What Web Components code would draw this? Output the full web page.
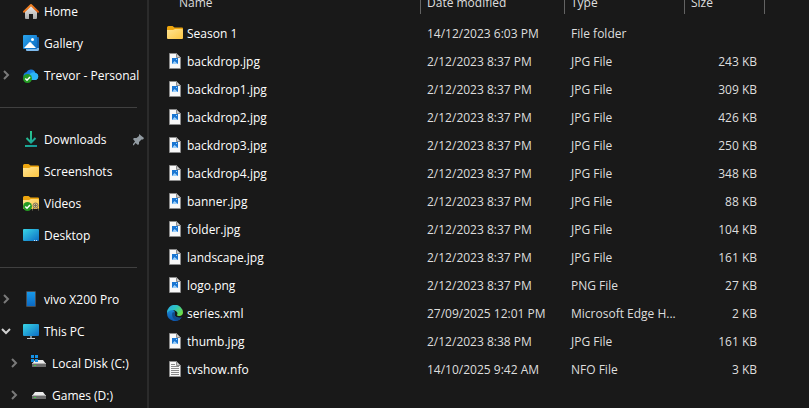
<!DOCTYPE html>
<html lang="en">
<head>
<meta charset="utf-8">
<title>File Explorer</title>
<style>
    html, body {
        margin: 0;
        height: 100%;
        overflow: hidden;
        background: #191919;
        color: #fff;
        font: 12px/16px "Open Sans", "Noto Sans", sans-serif;
    }
</style>
</head>
<body>
<explorer-window>
    <nav-pane slot="nav">
        <nav-item icon="home">Home</nav-item>
        <nav-item icon="gallery">Gallery</nav-item>
        <nav-item icon="cloud" toggle="closed">Trevor - Personal</nav-item>
        <nav-divider></nav-divider>
        <nav-item icon="download" pinned>Downloads</nav-item>
        <nav-item icon="folder">Screenshots</nav-item>
        <nav-item icon="videos">Videos</nav-item>
        <nav-item icon="desktop">Desktop</nav-item>
        <nav-divider></nav-divider>
        <nav-item icon="phone" toggle="closed">vivo X200 Pro</nav-item>
        <nav-item icon="pc" toggle="open">This PC</nav-item>
        <nav-item icon="disk-win" toggle="closed" nested>Local Disk (C:)</nav-item>
        <nav-item icon="disk" toggle="closed" nested>Games (D:)</nav-item>
    </nav-pane>
    <file-table></file-table>
</explorer-window>

<script>
const ICONS = {
    'home': `
        <defs>
            <linearGradient id="a" x2="0" y2="1"><stop stop-color="#f2f2f2"/><stop offset="1" stop-color="#a9a9a9"/></linearGradient>
            <linearGradient id="b" x2="1" y2="1"><stop stop-color="#f9902b"/><stop offset="1" stop-color="#d8590f"/></linearGradient>
        </defs>
        <path fill="url(#a)" d="M2 7.5 8 2l6 5.500V15a1 1 0 0 1-1 1h-3v-5H6v5H3a1 1 0 0 1-1-1z"/>
        <path fill="none" stroke="url(#b)" stroke-width="2" stroke-linecap="round" stroke-linejoin="round" d="M1 8.700 8 2l7 6.700"/>`,
    'gallery': `
        <defs><linearGradient id="a" x2="1" y2="1"><stop stop-color="#2aa5ee"/><stop offset="1" stop-color="#0b6bc4"/></linearGradient></defs>
        <path fill="#1663ad" d="M13 2h2a1 1 0 0 1 1 1v11H13z"/>
        <path fill="#7db9ec" d="M3 13h13v1.500a1.500 1.500 0 0 1-1.500 1.500H4a1 1 0 0 1-1-1z"/>
        <rect width="14" height="14" rx="1" fill="url(#a)"/>
        <path fill="#fff" d="m1 13 5.200-5.600q.8-.7 1.600 0L13 13z"/>
        <circle cx="9.500" cy="4.500" r="1.500" fill="#fff"/>`,
    'cloud': `
        <defs><linearGradient id="a" x2="1" y2="1"><stop stop-color="#0a5fd0"/><stop offset="1" stop-color="#35c3fb"/></linearGradient></defs>
        <path fill="url(#a)" d="M4 13a4 4 0 0 1-.7-7.800A5 5 0 0 1 12.500 6 3.600 3.600 0 0 1 12.400 13z"/>
        <path fill="#2cb4f6" d="M7 7q3-3 5.500-1A3.600 3.600 0 0 1 12.400 13H6z"/>
        <circle cx="4.500" cy="11.500" r="4.500" fill="#259b24"/>
        <path fill="none" stroke="#fff" stroke-width="1.500" d="m2.300 11.500 1.700 1.700 3-3.200"/>`,
    'download': `
        <defs><linearGradient id="a" gradientUnits="userSpaceOnUse" x1="2" y1="0" x2="13" y2="16"><stop stop-color="#2fd08c"/><stop offset="1" stop-color="#14959a"/></linearGradient></defs>
        <path fill="none" stroke="url(#a)" stroke-width="2" d="M8 0v11M3.500 7 8 11.500 12.500 7M2 15h12"/>`,
    'folder': `
        <defs><linearGradient id="a" x2="1" y2="1"><stop stop-color="#ffe493"/><stop offset="1" stop-color="#fcc541"/></linearGradient></defs>
        <path fill="#eda50e" d="M0 2.500a1.500 1.500 0 0 1 1.500-1.500h4L7.500 2.500H15a1 1 0 0 1 1 1v5H0z"/>
        <path fill="url(#a)" d="M0 5h6L8 4h7a1 1 0 0 1 1 1v8a1 1 0 0 1-1 1H1a1 1 0 0 1-1-1z"/>`,
    'videos': `
        <defs><linearGradient id="a" x2="1" y2="1"><stop stop-color="#ffe493"/><stop offset="1" stop-color="#fcc541"/></linearGradient></defs>
        <path fill="#eda50e" d="M0 2.500a1.500 1.500 0 0 1 1.500-1.500h4L7.500 2.500H15a1 1 0 0 1 1 1v5H0z"/>
        <path fill="url(#a)" d="M0 5h6L8 4h7a1 1 0 0 1 1 1v8a1 1 0 0 1-1 1H1a1 1 0 0 1-1-1z"/>
        <circle cx="12.500" cy="10.500" r="2.500" fill="#e2c27a" stroke="#79715f"/>
        <path fill="none" stroke="#79715f" d="M12.500 9v3M11 10.500h3M9.500 15.500v-1l1.500-1.500M15.500 15.500v-1L14 13"/>
        <circle cx="4.500" cy="11.500" r="4.500" fill="#259b24"/>
        <path fill="none" stroke="#fff" stroke-width="1.500" d="m2.300 11.500 1.700 1.700 3-3.200"/>`,
    'desktop': `
        <defs><linearGradient id="a" x2="1" y2="1"><stop stop-color="#38d6e6"/><stop offset="1" stop-color="#0c6cc5"/></linearGradient></defs>
        <rect y="2" width="16" height="12" rx="1" fill="url(#a)"/>
        <path fill="#cfe6f8" d="M11 13h1v1h-1zM13 13h1v1h-1z"/>`,
    'phone': `
        <defs><linearGradient id="a" x2="0" y2="1"><stop stop-color="#189bea"/><stop offset="1" stop-color="#0b68c2"/></linearGradient></defs>
        <rect x="3.500" y=".5" width="9" height="15" rx=".5" fill="url(#a)" stroke="#474d54"/>`,
    'pc': `
        <defs><linearGradient id="a" x2="1" y2="1"><stop stop-color="#38d6e6"/><stop offset="1" stop-color="#0c6cc5"/></linearGradient></defs>
        <path fill="#7e8a92" d="M7 13h2v2H7z"/>
        <path fill="#c3c9cd" d="M4 15h8v1H4z"/>
        <rect y="1" width="16" height="12" rx="1" fill="url(#a)"/>`,
    'disk': `
        <path fill="#ececec" d="M4 5h8l3 4H1z"/>
        <rect x="1" y="8" width="14" height="4" rx=".5" fill="#6d6d6d"/>
        <path fill="#b4b4b4" d="M1 8h14v1H1z"/>
        <path fill="#3ecb3e" d="M3 10h2v1H3z"/>`,
    'disk-win': `
        <path fill="#ececec" d="M4 5h8l3 4H1z"/>
        <rect x="1" y="8" width="14" height="4" rx=".5" fill="#6d6d6d"/>
        <path fill="#b4b4b4" d="M1 8h14v1H1z"/>
        <path fill="#3ecb3e" d="M3 10h2v1H3z"/>
        <path fill="#1592e6" d="M0 0h3v3H0zM4 0h3v3H4zM0 4h3v3H0zM4 4h3v3H4z"/>`,
    'image': `
        <path fill="#f8f8f8" stroke="#8d8d8d" d="M2.500.5h7l4 4v11h-11z"/>
        <path fill="#c9c9c9" stroke="#8d8d8d" d="M9.500.5v4h4z"/>
        <rect x="5" y="5" width="6" height="6" fill="#1a76d2"/>
        <path fill="#9ed0fa" d="m5 11 2.500-3L11 11zM9 6h1v1H9z"/>`,
    'text': `
        <path fill="#f8f8f8" stroke="#8d8d8d" d="M2.500.5h7l4 4v11h-11z"/>
        <path fill="#c9c9c9" stroke="#8d8d8d" d="M9.500.5v4h4z"/>
        <path stroke="#8a8a8a" d="M4 3.500h4M4 5.500h8M4 7.500h8M4 9.500h8M4 11.500h8M4 13.500h8"/>`,
    'edge': `
        <defs>
            <linearGradient id="a" x2="1" y2=".6"><stop stop-color="#2ba7e6"/><stop offset=".5" stop-color="#2cc3c3"/><stop offset="1" stop-color="#6bdd48"/></linearGradient>
            <linearGradient id="b" x2="0" y2="1"><stop stop-color="#1c8fdc"/><stop offset="1" stop-color="#0d55ac"/></linearGradient>
        </defs>
        <path fill="url(#b)" d="M0 8a8 8 0 0 0 14.800 4.200c-1.800.9-4 .8-5.500-.2C7.500 10.800 7 9 8 7L5 3.500Q0 4.500 0 8z"/>
        <path fill="#114a8b" d="M5.500 7.500c-1.200 3 .5 7.500 4.500 8.200a8 8 0 0 0 4.800-3.500c-2 .9-4 .8-5.500-.2C7.500 10.800 7 9 8 7z"/>
        <path fill="url(#a)" d="M0 8a8 8 0 0 1 16-.5c0 2.300-1.700 3.500-3.500 3.500-1.500 0-2.800-.6-2.500-1.200.7-.9.700-2-.3-3C7.500 4.300 2.500 4.300 0 8z"/>`,
    'closed': '<path fill="none" stroke="#7a7a7a" stroke-width="2" d="m6 4 4 4-4 4"/>',
    'open': '<path fill="none" stroke="#d0d0d0" stroke-width="2" d="m4 6 4 4 4-4"/>',
    'pin': `
        <path fill="#929ba2" d="m10 3 5 4-1 1.500h-1.500L10 11v2l-1 1-2.500-2L5 14l-1 .5V13l2-2.500L4 8l1-1h2.500L10 5z"/>`
};

class ExplorerIcon extends HTMLElement {

    constructor() {
        super();
        this.attachShadow({mode: 'open'});
    }

    connectedCallback() {
        this.shadowRoot.innerHTML = `
            <style>
                :host { display: block; flex: none; width: 16px; height: 16px; }
                svg { display: block; width: 100%; height: 100%; }
            </style>
            <svg viewBox="0 0 16 16" aria-hidden="true">${ICONS[this.getAttribute('name')]}</svg>`;
    }
}

class ExplorerWindow extends HTMLElement {

    constructor() {
        super();
        this.attachShadow({mode: 'open'}).innerHTML = `
            <style>
                :host { display: flex; height: 100%; overflow: hidden; }
                main { flex: 1; min-width: 0; overflow: hidden; }
            </style>
            <slot name="nav"></slot>
            <main><slot></slot></main>`;
    }
}

class NavPane extends HTMLElement {

    constructor() {
        super();
        this.attachShadow({mode: 'open'}).innerHTML = `
            <style>
                :host {
                    display: block;
                    flex: none;
                    width: 147px;
                    overflow: hidden;
                    border-right: 2px solid #2b2b2b;
                }
                /* list is scrolled slightly past its first row */
                nav { margin-top: -5px; }
            </style>
            <nav aria-label="Folders"><slot></slot></nav>`;
    }
}

class NavDivider extends HTMLElement {

    constructor() {
        super();
        this.attachShadow({mode: 'open'}).innerHTML = `
            <style>
                :host { display: flex; align-items: center; height: 32px; padding-right: 10px; }
                hr { flex: 1; margin: 0; border: 0; border-top: 1px solid #404040; }
            </style>
            <hr>`;
    }
}

class NavItem extends HTMLElement {

    constructor() {
        super();
        this.attachShadow({mode: 'open'});
    }

    connectedCallback() {
        const toggle = this.getAttribute('toggle');
        this.shadowRoot.innerHTML = `
            <style>${this.componentStyle}</style>
            ${toggle ? `<button type="button" aria-label="Expand" aria-expanded="${toggle === 'open'}">
                <explorer-icon name="${toggle}"></explorer-icon>
            </button>` : '<span class="spacer"></span>'}
            <a href="#">
                <explorer-icon name="${this.getAttribute('icon')}"></explorer-icon>
                <span><slot></slot></span>
            </a>
            ${this.hasAttribute('pinned') ? '<explorer-icon name="pin"></explorer-icon>' : ''}`;
    }

    get componentStyle() {
        return `
            :host {
                display: flex;
                align-items: center;
                height: 32px;
                padding-right: 2px;
            }
            :host([nested]) { padding-left: 8px; }
            button, .spacer {
                flex: none;
                display: flex;
                justify-content: center;
                width: 11px;
                margin-right: 12px;
                padding: 0;
                border: 0;
                background: none;
            }
            a {
                flex: 1;
                display: flex;
                align-items: center;
                gap: 5px;
                color: inherit;
                text-decoration: none;
                white-space: nowrap;
            }
            a span { padding-top: 2px; }`;
    }
}

const FILES = [
    ['folder', 'Season 1', '14/12/2023 6:03 PM', 'File folder', ''],
    ['image', 'backdrop.jpg', '2/12/2023 8:37 PM', 'JPG File', '243 KB'],
    ['image', 'backdrop1.jpg', '2/12/2023 8:37 PM', 'JPG File', '309 KB'],
    ['image', 'backdrop2.jpg', '2/12/2023 8:37 PM', 'JPG File', '426 KB'],
    ['image', 'backdrop3.jpg', '2/12/2023 8:37 PM', 'JPG File', '250 KB'],
    ['image', 'backdrop4.jpg', '2/12/2023 8:37 PM', 'JPG File', '348 KB'],
    ['image', 'banner.jpg', '2/12/2023 8:37 PM', 'JPG File', '88 KB'],
    ['image', 'folder.jpg', '2/12/2023 8:37 PM', 'JPG File', '104 KB'],
    ['image', 'landscape.jpg', '2/12/2023 8:37 PM', 'JPG File', '161 KB'],
    ['image', 'logo.png', '2/12/2023 8:37 PM', 'PNG File', '27 KB'],
    ['edge', 'series.xml', '27/09/2025 12:01 PM', 'Microsoft Edge H...', '2 KB'],
    ['image', 'thumb.jpg', '2/12/2023 8:38 PM', 'JPG File', '161 KB'],
    ['text', 'tvshow.nfo', '14/10/2025 9:42 AM', 'NFO File', '3 KB']
];

class FileTable extends HTMLElement {

    constructor() {
        super();
        this.attachShadow({mode: 'open'});
    }

    connectedCallback() {
        this.shadowRoot.innerHTML = `
            <style>${this.componentStyle}</style>
            <table>
                <thead>
                    <tr>
                        <th class="name">Name</th>
                        <th class="date">Date modified</th>
                        <th class="type">Type</th>
                        <th class="size">Size</th>
                    </tr>
                </thead>
                <tbody>${FILES.map(file => this.row(file)).join('')}</tbody>
            </table>`;
    }

    row([icon, name, date, type, size]) {
        return `
            <tr>
                <td><div class="file"><explorer-icon name="${icon}"></explorer-icon><span>${name}</span></div></td>
                <td>${date}</td>
                <td>${type}</td>
                <td>${size}</td>
            </tr>`;
    }

    get componentStyle() {
        return `
            :host {
                display: block;
                padding-right: 44px;
                margin-top: -10px;
                color: #dedede;
            }
            table {
                width: 100%;
                table-layout: fixed;
                border-spacing: 0;
            }
            th, td {
                box-sizing: border-box;
                padding: 2px 0 0 6px;
                text-align: left;
                font-weight: normal;
                white-space: nowrap;
            }
            th {
                height: 24px;
                border-right: 1px solid #636363;
            }
            td { height: 28px; }
            th.name { padding-left: 30px; }
            th.date { width: 144px; }
            th.type { width: 120px; }
            th.size { width: 80px; }
            tbody::before {
                content: '';
                display: block;
                height: 5px;
            }
            td:first-child {
                padding: 0 0 0 18px;
                color: #fff;
            }
            td:last-child {
                padding-right: 8px;
                text-align: right;
            }
            .file {
                display: flex;
                align-items: center;
                gap: 4px;
            }
            .file span { padding-top: 2px; }`;
    }
}

window.customElements.define('explorer-icon', ExplorerIcon);
window.customElements.define('explorer-window', ExplorerWindow);
window.customElements.define('nav-pane', NavPane);
window.customElements.define('nav-divider', NavDivider);
window.customElements.define('nav-item', NavItem);
window.customElements.define('file-table', FileTable);
</script>
</body>
</html>
